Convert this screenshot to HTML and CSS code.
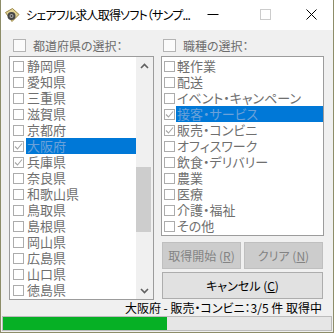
FILE: index.html
```html
<!DOCTYPE html>
<html lang="ja">
<head>
<meta charset="utf-8">
<title>シェアフル求人取得ソフト</title>
<link rel="stylesheet" href="styles.css">
</head>
<body>
<div class="window">
  <div class="titlebar">
    <svg class="app-icon" width="16" height="16" viewBox="0 0 16 16">
      <path d="M1.5 5.5 L8.5 1.5 L15 7.5 L8 14.5 Z" fill="#e3d394" stroke="#9a8848" stroke-width="1"/>
      <circle cx="7.5" cy="9" r="4" fill="#474747"/>
      <circle cx="7.5" cy="9" r="2" fill="#a9a9a9"/>
      <circle cx="7.5" cy="9" r="0.9" fill="#3a3a3a"/>
    </svg>
    <span class="title">シェアフル求人取得ソフト（サンプ...</span>
    <div class="controls">
      <span class="ctl ctl-min"><svg width="12" height="12" viewBox="0 0 12 12"><path d="M0.5 6.5 H11.5" stroke="#000" stroke-width="1"/></svg></span>
      <span class="ctl ctl-max"><svg width="11" height="11" viewBox="0 0 11 11"><rect x="0.5" y="0.5" width="10" height="10" fill="none" stroke="#cccccc" stroke-width="1"/></svg></span>
      <span class="ctl ctl-close"><svg width="11" height="11" viewBox="0 0 11 11"><path d="M0.5 0.5 L10.5 10.5 M10.5 0.5 L0.5 10.5" stroke="#000" stroke-width="1"/></svg></span>
    </div>
  </div>
  <div class="client">
    <div class="columns">
      <div class="col col-left">
        <div class="group-head head-left"><span class="hcb"></span><span class="hlabel">都道府県の選択：</span></div>
        <div class="listbox list-left">
          <ul class="items">
            <li class="item"><span class="cb"></span><span class="txt">静岡県</span></li>
            <li class="item"><span class="cb"></span><span class="txt">愛知県</span></li>
            <li class="item"><span class="cb"></span><span class="txt">三重県</span></li>
            <li class="item"><span class="cb"></span><span class="txt">滋賀県</span></li>
            <li class="item"><span class="cb"></span><span class="txt">京都府</span></li>
            <li class="item sel"><span class="cb"><svg class="chk" width="9" height="9" viewBox="0 0 9 9"><path d="M1 4.5 L3.5 7 L8 1.5" fill="none" stroke="#a6a6a6" stroke-width="1.1"/></svg></span><span class="txt">大阪府</span></li>
            <li class="item"><span class="cb"><svg class="chk" width="9" height="9" viewBox="0 0 9 9"><path d="M1 4.5 L3.5 7 L8 1.5" fill="none" stroke="#a6a6a6" stroke-width="1.1"/></svg></span><span class="txt">兵庫県</span></li>
            <li class="item"><span class="cb"></span><span class="txt">奈良県</span></li>
            <li class="item"><span class="cb"></span><span class="txt">和歌山県</span></li>
            <li class="item"><span class="cb"></span><span class="txt">鳥取県</span></li>
            <li class="item"><span class="cb"></span><span class="txt">島根県</span></li>
            <li class="item"><span class="cb"></span><span class="txt">岡山県</span></li>
            <li class="item"><span class="cb"></span><span class="txt">広島県</span></li>
            <li class="item"><span class="cb"></span><span class="txt">山口県</span></li>
            <li class="item"><span class="cb"></span><span class="txt">徳島県</span></li>
          </ul>
          <div class="scrollbar">
            <div class="sb-btn"><svg width="9" height="6" viewBox="0 0 9 6"><path d="M1 5 L4.5 1.5 L8 5" fill="none" stroke="#606060" stroke-width="1.6"/></svg></div>
            <div class="sb-track"><div class="sb-thumb"></div></div>
            <div class="sb-btn"><svg width="9" height="6" viewBox="0 0 9 6"><path d="M1 1 L4.5 4.5 L8 1" fill="none" stroke="#606060" stroke-width="1.6"/></svg></div>
          </div>
        </div>
      </div>
      <div class="col col-right">
        <div class="group-head head-right"><span class="hcb"></span><span class="hlabel">職種の選択：</span></div>
        <div class="listbox list-right">
          <ul class="items">
            <li class="item"><span class="cb"></span><span class="txt">軽作業</span></li>
            <li class="item"><span class="cb"></span><span class="txt">配送</span></li>
            <li class="item"><span class="cb"></span><span class="txt">イベント・キャンペーン</span></li>
            <li class="item sel"><span class="cb"><svg class="chk" width="9" height="9" viewBox="0 0 9 9"><path d="M1 4.5 L3.5 7 L8 1.5" fill="none" stroke="#a6a6a6" stroke-width="1.1"/></svg></span><span class="txt">接客・サービス</span></li>
            <li class="item"><span class="cb"><svg class="chk" width="9" height="9" viewBox="0 0 9 9"><path d="M1 4.5 L3.5 7 L8 1.5" fill="none" stroke="#a6a6a6" stroke-width="1.1"/></svg></span><span class="txt">販売・コンビニ</span></li>
            <li class="item"><span class="cb"></span><span class="txt">オフィスワーク</span></li>
            <li class="item"><span class="cb"></span><span class="txt">飲食・デリバリー</span></li>
            <li class="item"><span class="cb"></span><span class="txt">農業</span></li>
            <li class="item"><span class="cb"></span><span class="txt">医療</span></li>
            <li class="item"><span class="cb"></span><span class="txt">介護・福祉</span></li>
            <li class="item"><span class="cb"></span><span class="txt">その他</span></li>
          </ul>
        </div>
        <div class="btn-row">
          <button class="btn btn-disabled">取得開始 (<u>R</u>)</button>
          <button class="btn btn-disabled">クリア (<u>N</u>)</button>
        </div>
        <button class="btn btn-cancel">キャンセル (<u>C</u>)</button>
      </div>
    </div>
    <div class="status">大阪府 - 販売・コンビニ：3/5 件 取得中</div>
  </div>
  <div class="progress"><div class="progress-fill" style="width:50%"></div></div>
</div>
</body>
</html>
```

FILE: styles.css
```css
* { box-sizing: border-box; }
html, body { margin: 0; padding: 0; background: #f0f0f0; }

.window {
  width: 334px;
  height: 333px;
  border: 1px solid #8d8d69;
  border-top: none;
  background: #f0f0f0;
  display: flex;
  flex-direction: column;
  font-family: "Noto Sans CJK JP", "Liberation Sans", sans-serif;
  font-feature-settings: "palt";
  overflow: hidden;
}

.titlebar {
  height: 30px;
  margin: 0 -1px;
  background: #ffffff;
  display: flex;
  align-items: center;
  flex-shrink: 0;
}
.app-icon { margin-left: 4px; margin-top: -1px; flex-shrink: 0; }
.title {
  margin-left: 6px;
  font-size: 12px;
  letter-spacing: -0.8px;
  color: #000;
  white-space: nowrap;
  margin-top: -1px;
}
.controls { margin-left: auto; display: flex; height: 30px; }
.ctl { width: 46px; height: 30px; display: flex; align-items: center; justify-content: center; }
.ctl-min { margin-right: 6px; }
.ctl svg { display: block; margin-top: -2px; }

.client {
  display: flex;
  flex-direction: column;
  padding: 8px 9px 0 8px;
}
.columns { display: flex; gap: 7px; }
.col-left { width: 145px; }
.col-right { width: 163px; display: flex; flex-direction: column; }

.group-head {
  height: 18px;
  display: flex;
  align-items: center;
  padding-bottom: 3px;
  gap: 7px;
  font-size: 12px;
  line-height: 14px;
  color: #6d6d6d;
}
.head-left { padding-left: 4px; }
.head-right { padding-left: 2px; }
.hcb {
  width: 13px;
  height: 13px;
  border: 1px solid #b4b4b4;
  background: #fbfbfb;
  flex-shrink: 0;
}
.hlabel { white-space: nowrap; }

.listbox {
  border: 1px solid #9c9c9c;
  background: #ffffff;
  display: flex;
}
.list-left { height: 244px; }
.list-right { height: 180px; }

.items {
  list-style: none;
  margin: 0;
  padding: 1px 0 0 0;
  flex: 1;
  min-width: 0;
}
.item {
  height: 16px;
  display: flex;
  align-items: center;
  font-size: 13px;
  line-height: 16px;
  color: #6f6f6f;
  white-space: nowrap;
}
.list-left .item { padding-left: 3px; }
.list-left .cb { margin-right: 2px; }
.list-right .item { padding-left: 2px; }
.list-right .cb { margin-right: 1px; }

.cb {
  width: 11px;
  height: 11px;
  border: 1px solid #acacac;
  background: #fff;
  flex-shrink: 0;
  display: flex;
  align-items: center;
  justify-content: center;
}
.chk { display: block; }
.txt {
  flex: 1;
  height: 16px;
  padding-left: 1px;
}
.sel .txt { background: #0078d7; color: #6aa1d9; }

.scrollbar {
  width: 17px;
  background: #f0f0f0;
  display: flex;
  flex-direction: column;
  flex-shrink: 0;
}
.sb-btn { height: 17px; display: flex; align-items: center; justify-content: center; }
.sb-btn svg { display: block; }
.sb-track { flex: 1; padding-right: 2px; }
.sb-thumb { margin-top: 93px; height: 65px; background: #cdcdcd; }

.btn-row { display: flex; gap: 3px; margin: 6px 1px 0 1px; }
.btn {
  font-family: inherit;
  font-feature-settings: "palt";
  font-size: 12px;
  height: 27px;
  padding: 0;
  border: 1px solid #bfbfbf;
  background: #cccccc;
  color: #838383;
  display: flex;
  align-items: center;
  justify-content: center;
}
.btn-row .btn { flex: 1; }
.btn-cancel {
  margin: 3px 1px 0 1px;
  background: #e1e1e1;
  border-color: #adadad;
  color: #000;
}
.btn u { text-underline-offset: 1px; }

.status {
  height: 16px;
  line-height: 16px;
  text-align: right;
  font-size: 12px;
  color: #000;
  padding-right: 2px;
  white-space: nowrap;
}

.progress {
  height: 15px;
  margin: 0 1px 1px 1px;
  border: 1px solid #bcbcbc;
  background: #e6e6e6;
  flex-shrink: 0;
}
.progress-fill { height: 100%; background: #06b025; }
```
